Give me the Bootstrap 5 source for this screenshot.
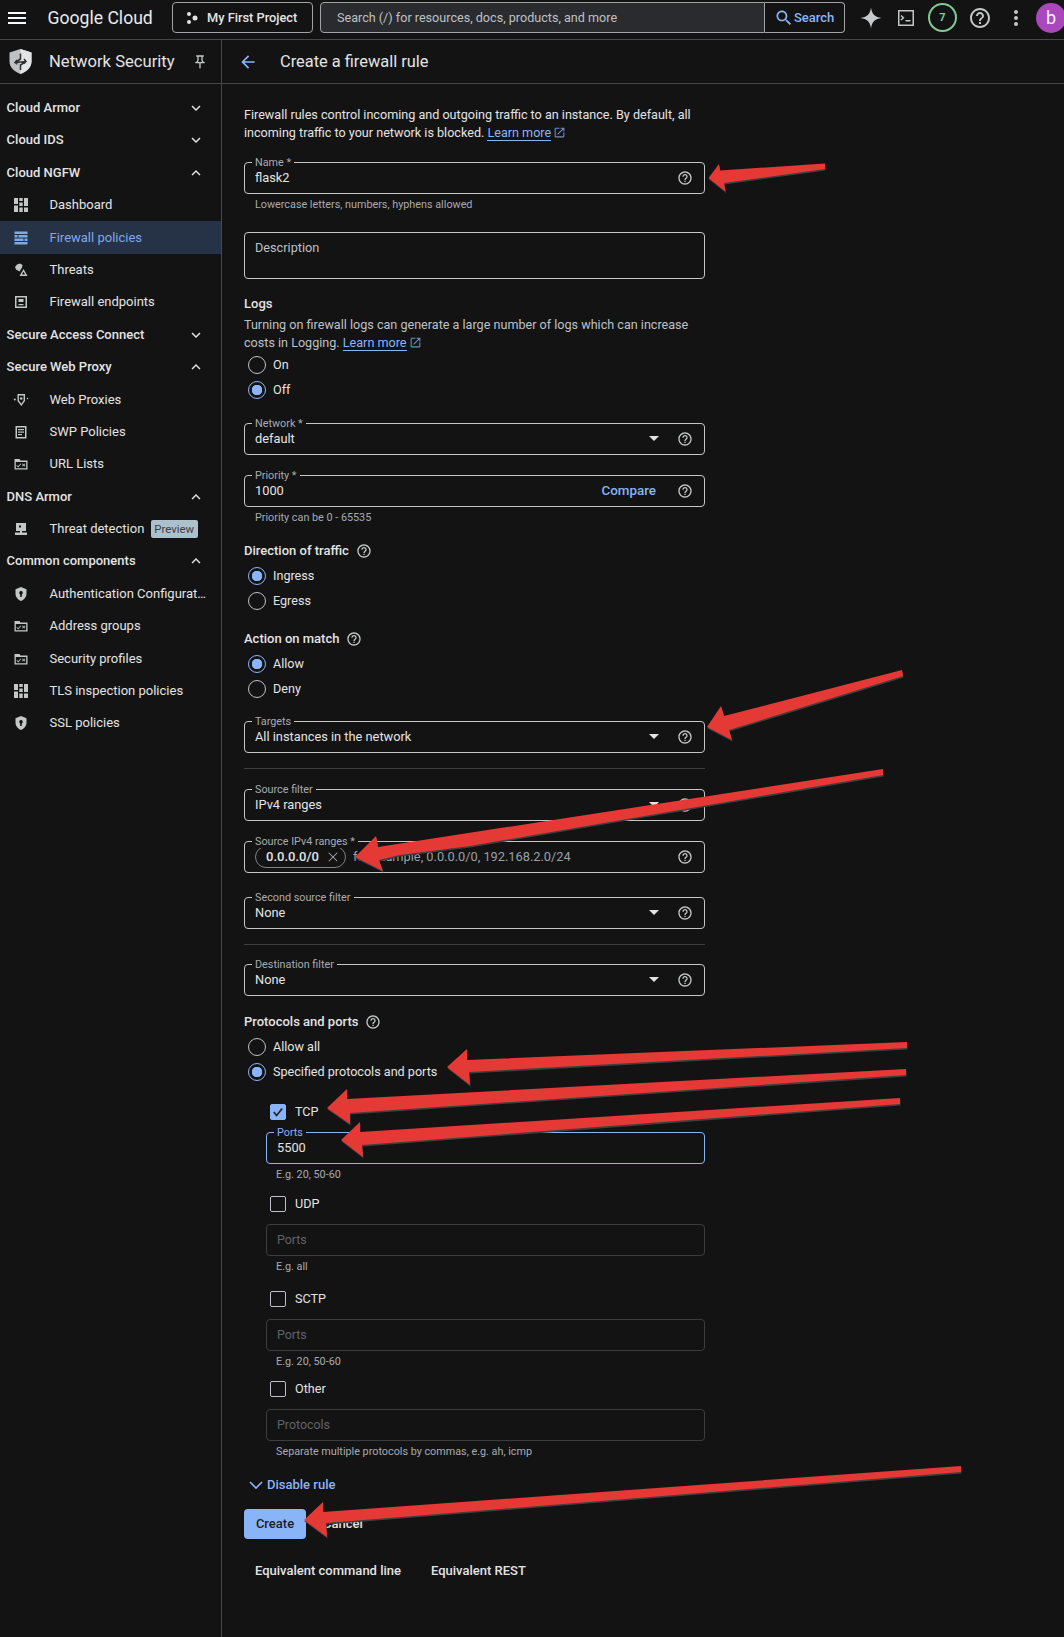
<!DOCTYPE html>
<html lang="en">
<head>
<meta charset="UTF-8" />
<meta name="viewport" content="width=device-width, initial-scale=1" />
<title>Create a firewall rule</title>
<link href="https://cdn.jsdelivr.net/npm/bootstrap@5.3.0/dist/css/bootstrap.min.css" rel="stylesheet">
<script src="https://cdn.jsdelivr.net/npm/bootstrap@5.3.0/dist/js/bootstrap.bundle.min.js"></script>
<style>
    html, body { background: #131314; }
    body { width: 1064px; height: 1637px; overflow: hidden; position: relative; color: #e3e3e3; font-family: Roboto, "Liberation Sans", sans-serif; font-size: 13px; line-height: 18px; }
    a { color: #8ab4f8; }
    svg { fill: currentColor; flex: none; display: block; }

    /* top bar */
    .topbar { height: 40px; border-bottom: 1px solid #47484a; padding: 0 0 4px 5px; }
    .topbar > * { flex: none; }
    .gc-logo { font-family: Roboto, sans-serif; font-size: 17.6px; color: #e8eaed; margin-left: 18.5px; width: 124.5px; white-space: nowrap; }
    .project-btn { width: 141px; height: 31px; border: 1px solid #a0a2a5; border-radius: 4px; padding-left: 12px; color: #e3e3e3; font-weight: 500; font-size: 12.8px; gap: 8px; }
    .search-box { width: 445px; height: 31px; margin-left: 7px; background: #2a2b2f; border: 1px solid #a0a2a5; border-radius: 4px 0 0 4px; padding-left: 16px; color: #bdc1c6; font-size: 12.6px; }
    .search-go { width: 80px; height: 31px; border: 1px solid #a0a2a5; border-left: 0; border-radius: 0 4px 4px 0; color: #8ab4f8; font-weight: 500; padding-left: 9px; gap: 0; }
    .ic-spark { margin-left: 13.5px; color: #c8c9cb; }
    .ic-term { margin-left: 11.5px; color: #c4c7c5; }
    .ic-help { margin-left: 11px; color: #c4c7c5; }
    .ic-dots { margin-left: 12px; color: #c4c7c5; }
    .count-ring { width: 29px; height: 29px; margin-left: 10px; border: 2px solid #81c995; border-radius: 50%; color: #81c995; font-size: 11px; font-weight: 700; }
    .avatar-b { width: 30px; height: 30px; margin-left: 8px; border-radius: 50%; background: #ab47bc; color: #f3f3f3; font-size: 18px; }

    /* left nav */
    .sidenav { width: 222px; height: 1597px; border-right: 1px solid #47484a; flex: none; }
    .pane-head { height: 44px; border-bottom: 1px solid #47484a; }
    .nav-title { font-size: 16.6px; padding-left: 9px; color: #e3e3e3; }
    .nav-title span { margin-left: 17px; width: 143px; white-space: nowrap; }
    .nav-list { padding-top: 7.8px; }
    .nav-row { height: 32.4px; color: #e3e3e3; }
    .nav-group { padding: 0 16px 0 6.6px; font-weight: 500; justify-content: space-between; }
    .nav-item { padding-left: 13px; gap: 20.5px; }
    .nav-item.sel { background: #263245; color: #7fa9ea; }
    .nav-item svg { color: #c4c7c5; }
    .nav-item.sel svg { color: #7fa9ea; }
    .nav-label { max-width: 160px; }
    .tag-preview { background: #adc1cc; color: #3c4043; font-size: 11.4px; line-height: 18px; height: 18px; padding: 0 3.500px; border-radius: 2px; margin-left: -14px; }

    /* form */
    .form-pane { padding: 21.7px 0 0 22px; width: 483px; font-size: 12.6px; }
    .title-row { padding-left: 16px; font-size: 16.4px; }
    .title-row span { margin-left: 22px; white-space: nowrap; }
    .title-row svg { color: #8ab4f8; }
    .muted-txt { color: #bdc1c6; }
    .ext-ic { display: inline-block; vertical-align: -2px; margin-left: 2px; color: #6f8fc4; }
    a.lm { text-decoration: none; border-bottom: 1px solid #8ab4f8; }
    .o-field { position: relative; height: 32px; border: 1px solid #c4c7c5; border-radius: 4px; padding: 0 11px 0 10px; font-size: 12.8px; }
    .o-field.tall { height: 47px; align-items: flex-start !important; padding-top: 6px; color: #bdc1c6; font-size: 12.7px; }
    .o-field.inset { margin-left: 22px; }
    .o-field.focus { border-color: #8ab4f8; }
    .o-field.off { border-color: #3c3d40; color: #5f6368; font-size: 12.4px; }
    .o-label { position: absolute; left: 7px; top: -6px; padding: 0 3px; background: #131314; color: #a8abaf; font-size: 10.8px; line-height: 12px; white-space: nowrap; }
    .o-field.focus .o-label { color: #8ab4f8; }
    .o-val { flex: 1 1 auto; }
    .caret-dn { width: 0; height: 0; border: 5px solid transparent; border-top: 5px solid #e3e3e3; border-bottom: 0; margin-right: 18px; }
    .compare-link { font-size: 13.4px; margin-right: 21px; }
    .help-ic { color: #c4c7c5; }
    .hint-txt { font-size: 10.8px; line-height: 18px; height: 16px; margin-top: 2px; padding-left: 11px; color: #a8abaf; }
    .hint-txt.inset { padding-left: 32px; }
    .sect-title { font-weight: 500; font-size: 13px; height: 18px; gap: 7px; }
    .opt-row { height: 25px; padding-left: 4px; gap: 7px; margin: 0; }
    .opt-row .form-check-input { width: 18px; height: 18px; margin: 0; float: none; flex: none; background-color: transparent; border: 1px solid #bdc1c6; }
    .opt-row .form-check-input:checked { border-color: #8ab4f8; background: radial-gradient(circle, #8ab4f8 0 5px, transparent 5.500px); }
    .chk-row { height: 24px; padding-left: 26px; gap: 9px; }
    .chk-row .form-check-input { width: 16px; height: 16px; margin: 0; float: none; flex: none; background-color: transparent; border: 1px solid #bdc1c6; border-radius: 2px; }
    .chk-row .form-check-input:checked { background-color: #8ab4f8; border-color: #8ab4f8; background-image: url("data:image/svg+xml,%3csvg xmlns='http://www.w3.org/2000/svg' viewBox='0 0 20 20'%3e%3cpath fill='none' stroke='%23202124' stroke-width='2.4' d='m4 10 4 5 8-10'/%3e%3c/svg%3e"); }
    .chip-ip { height: 22px; width: 91px; margin-right: 7px; border: 1px solid #7f8184; border-radius: 11px; padding: 0 3px 0 10px; font-weight: 500; justify-content: space-between; font-size: 13px; }
    .ph-txt { color: #9aa0a6; }
    .rule-line { height: 1px; background: #3c3d40; }
    .disable-link { color: #8ab4f8; font-weight: 500; font-size: 13px; height: 18px; padding-left: 5px; gap: 4px; }
    .btn-create { width: 62px; height: 30px; padding: 0; background: #8ab4f8; border: 0; border-radius: 4px; color: #202124; font-size: 13px; line-height: 30px; font-weight: 500; }
    .btn-cancel { height: 30px; padding: 0 0 0 17px; border: 0; color: #e3e3e3; font-size: 13px; line-height: 30px; font-weight: 500; }
    .equiv-row { padding-left: 11px; gap: 30px; font-size: 13px; font-weight: 500; color: #e3e3e3; }
    .arrow-layer { position: absolute; left: 0; top: 0; pointer-events: none; }

    /* vertical spacing from the screenshot */
    .t1 { margin-top: 1px; }
    .t3 { margin-top: 3px; }
    .t4 { margin-top: 4px; }
    .t8 { margin-top: 8px; }
    .t10 { margin-top: 10px; }
    .t13 { margin-top: 13px; }
    .t15 { margin-top: 15px; }
    .t16 { margin-top: 16px; }
    .t17 { margin-top: 17px; }
    .t19 { margin-top: 19px; }
    .t20 { margin-top: 20px; }
    .t23 { margin-top: 23px; }
    .t24 { margin-top: 24px; }
</style>
</head>
<body>

<svg width="0" height="0" class="position-absolute">
    <symbol id="i-help" viewBox="0 0 24 24"><path d="M11 18h2v-2h-2v2zm1-16C6.48 2 2 6.48 2 12s4.48 10 10 10 10-4.48 10-10S17.52 2 12 2zm0 18c-4.41 0-8-3.59-8-8s3.59-8 8-8 8 3.59 8 8-3.59 8-8 8zm0-14c-2.21 0-4 1.79-4 4h2c0-1.1.9-2 2-2s2 .9 2 2c0 2-3 1.75-3 5h2c0-2.25 3-2.5 3-5 0-2.21-1.79-4-4-4z"/></symbol>
    <symbol id="i-down" viewBox="0 0 24 24"><path d="M16.59 8.59 12 13.17 7.41 8.59 6 10l6 6 6-6z"/></symbol>
    <symbol id="i-up" viewBox="0 0 24 24"><path d="M12 8l-6 6 1.41 1.41L12 10.83l4.59 4.58L18 14z"/></symbol>
    <symbol id="i-ext" viewBox="0 0 24 24"><path d="M19 19H5V5h7V3H5c-1.11 0-2 .9-2 2v14c0 1.1.89 2 2 2h14c1.1 0 2-.9 2-2v-7h-2v7zM14 3v2h3.59l-9.83 9.83 1.41 1.41L19 6.41V10h2V3h-7z"/></symbol>
    <symbol id="i-grid" viewBox="0 0 16 16"><rect x="1" y="1" width="4" height="6"/><rect x="1" y="8.5" width="4" height="6.5"/><rect x="6.3" y="1" width="3.4" height="3"/><rect x="6.3" y="5.5" width="3.4" height="3.5"/><rect x="6.3" y="10.5" width="3.4" height="4.5"/><rect x="11" y="1" width="4" height="8"/><rect x="11" y="10.5" width="4" height="4.5"/></symbol>
    <symbol id="i-wall" viewBox="0 0 16 16"><rect x="1.500" y="1.500" width="13" height="2.500"/><rect x="1.500" y="5" width="3" height="2.500"/><rect x="5.500" y="5" width="9" height="2.500"/><rect x="1.500" y="8.500" width="9" height="2.500"/><rect x="11.500" y="8.500" width="3" height="2.500"/><rect x="1.500" y="12" width="13" height="2.500"/></symbol>
    <symbol id="i-threat" viewBox="0 0 16 16"><path d="M7 1.500l2.500 1.500-.5 2.500-2.500 4-3.500-2-1-2.500 2-2.500z"/><path d="M10.500 7l4 7h-8zm0 2.500L9 12.500h3z" fill-rule="evenodd"/></symbol>
    <symbol id="i-endpoint" viewBox="0 0 16 16"><path d="M2 2h12v12H2zm1.500 1.500v9h9v-9z" fill-rule="evenodd"/><rect x="5.500" y="5" width="5" height="3"/><rect x="5.500" y="10" width="5" height="1.200"/></symbol>
    <symbol id="i-proxy" viewBox="0 0 16 16"><path d="M4.500 2h7.500v7l-3.700 5L4.500 9zm1.400 1.400v5.100l2.400 3.200 2.300-3.200V3.400z" fill-rule="evenodd"/><circle cx="8.200" cy="6.500" r="1.300"/><circle cx="1.800" cy="7.500" r="1"/><circle cx="14.500" cy="6.500" r=".8"/></symbol>
    <symbol id="i-doc" viewBox="0 0 16 16"><path d="M2.500 2h11v12.500h-11zM4 3.500V13h8V3.500z" fill-rule="evenodd"/><rect x="5" y="5" width="6" height="1.200"/><rect x="5" y="7.500" width="6" height="1.200"/><rect x="5" y="10" width="4" height="1.200"/></symbol>
    <symbol id="i-folder" viewBox="0 0 16 16"><path d="M1.500 3h5l1 1.500h7v9h-13zM2.800 6v6.200h10.400V6z" fill-rule="evenodd"/><path d="M4 9l1.200 1.300L7.500 7.500l.7.600-3 3.500L3.400 9.600zM9 8l.7-.6 1 1 1-1 .6.600-1 1 1 1-.6.600-1-1-1 1L9 10l1-1z"/></symbol>
    <symbol id="i-monitor" viewBox="0 0 16 16"><path d="M3 2h10v8H9v1.500h5V14H2v-2.500h5V10H3z"/><rect x="6" y="4.500" width="2" height="2" fill="#131314"/></symbol>
    <symbol id="i-shield" viewBox="0 0 16 16"><path d="M8 1l5.500 2.300v4.200c0 3.400-2.300 6.200-5.500 7.500-3.200-1.300-5.500-4.100-5.500-7.500V3.300zM8 5a1.800 1.800 0 0 0-.8 3.400V11h1.600V8.400A1.800 1.800 0 0 0 8 5z" fill-rule="evenodd"/></symbol>
</svg>

<header class="topbar d-flex align-items-center">
    <svg width="24" height="24" viewBox="0 0 24 24" class="text-light"><path d="M3 18h18v-2H3v2zm0-5h18v-2H3v2zm0-7v2h18V6H3z"/></svg>
    <div class="gc-logo">Google Cloud</div>
    <div class="project-btn d-flex align-items-center">
        <svg width="14" height="14" viewBox="0 0 14 14"><circle cx="4" cy="3" r="2"/><circle cx="10" cy="7" r="2.500"/><circle cx="4" cy="11" r="2"/></svg>
        <span>My First Project</span>
    </div>
    <div class="search-box d-flex align-items-center">Search (/) for resources, docs, products, and more</div>
    <div class="search-go d-flex align-items-center">
        <svg width="20" height="20" viewBox="0 0 24 24"><path d="M15.500 14h-.79l-.28-.27C15.410 12.590 16 11.110 16 9.500 16 5.910 13.090 3 9.500 3S3 5.910 3 9.500 5.910 16 9.500 16c1.610 0 3.090-.59 4.230-1.570l.27.28v.79l5 4.990L20.490 19l-4.990-5zm-6 0C7.010 14 5 11.990 5 9.500S7.010 5 9.500 5 14 7.010 14 9.500 11.990 14 9.500 14z"/></svg>
        <span>Search</span>
    </div>
    <svg width="24" height="24" viewBox="0 0 24 24" class="ic-spark"><path d="M12 1.500C12.800 8 16 11.200 22.500 12 16 12.800 12.800 16 12 22.500 11.200 16 8 12.800 1.500 12 8 11.200 11.200 8 12 1.500z"/></svg>
    <svg width="24" height="24" viewBox="0 0 24 24" class="ic-term"><path d="M4 4h16v16H4zm1.500 1.500v13h13v-13z" fill-rule="evenodd"/><path d="M7.500 9l3 2.800-3 2.800-1-1 1.900-1.800-1.900-1.800zM11.500 14h5v1.400h-5z"/></svg>
    <div class="count-ring d-flex align-items-center justify-content-center">7</div>
    <svg width="24" height="24" class="ic-help"><use href="#i-help"/></svg>
    <svg width="24" height="24" viewBox="0 0 24 24" class="ic-dots"><circle cx="12" cy="6" r="2"/><circle cx="12" cy="12" r="2"/><circle cx="12" cy="18" r="2"/></svg>
    <div class="avatar-b d-flex align-items-center justify-content-center">b</div>
</header>

<div class="d-flex">
    <aside class="sidenav">
        <div class="pane-head nav-title d-flex align-items-center">
            <svg width="23" height="25" viewBox="0 0 23 25"><path d="M11.500 0L22.500 3.500v9c0 5.500-4.500 10-11 12.500C5 22.500.5 18 .5 12.500v-9z" fill="#bfc1c3"/><path d="M11.500 0v25c6.500-2.500 11-7 11-12.500v-9z" fill="#e3e4e5"/><path d="M11.500 4.500V10L6 13.500l11-1-5.500 3.500v5M8 11l-2 2.500 2.500 1.500M15 10l2 2.500-2 2" stroke="#2e2f31" stroke-width="1.500" fill="none"/></svg>
            <span>Network Security</span>
            <svg width="16" height="16" viewBox="0 0 24 24"><path d="M14 4v5c0 1.120.37 2.160 1 3H9c.65-.86 1-1.900 1-3V4h4m3-2H7c-.55 0-1 .45-1 1s.45 1 1 1h1v5c0 1.660-1.340 3-3 3v2h5.970v7l1 1 1-1v-7H19v-2c-1.660 0-3-1.340-3-3V4h1c.55 0 1-.45 1-1s-.45-1-1-1z" fill="#c4c7c5"/></svg>
        </div>
        <nav class="nav-list">
            <div class="nav-row nav-group d-flex align-items-center">Cloud Armor<svg width="18" height="18"><use href="#i-down"/></svg></div>
            <div class="nav-row nav-group d-flex align-items-center">Cloud IDS<svg width="18" height="18"><use href="#i-down"/></svg></div>
            <div class="nav-row nav-group d-flex align-items-center">Cloud NGFW<svg width="18" height="18"><use href="#i-up"/></svg></div>
            <div class="nav-row nav-item d-flex align-items-center"><svg width="16" height="16"><use href="#i-grid"/></svg>Dashboard</div>
            <div class="nav-row nav-item sel d-flex align-items-center"><svg width="16" height="16"><use href="#i-wall"/></svg>Firewall policies</div>
            <div class="nav-row nav-item d-flex align-items-center"><svg width="16" height="16"><use href="#i-threat"/></svg>Threats</div>
            <div class="nav-row nav-item d-flex align-items-center"><svg width="16" height="16"><use href="#i-endpoint"/></svg>Firewall endpoints</div>
            <div class="nav-row nav-group d-flex align-items-center">Secure Access Connect<svg width="18" height="18"><use href="#i-down"/></svg></div>
            <div class="nav-row nav-group d-flex align-items-center">Secure Web Proxy<svg width="18" height="18"><use href="#i-up"/></svg></div>
            <div class="nav-row nav-item d-flex align-items-center"><svg width="16" height="16"><use href="#i-proxy"/></svg>Web Proxies</div>
            <div class="nav-row nav-item d-flex align-items-center"><svg width="16" height="16"><use href="#i-doc"/></svg>SWP Policies</div>
            <div class="nav-row nav-item d-flex align-items-center"><svg width="16" height="16"><use href="#i-folder"/></svg>URL Lists</div>
            <div class="nav-row nav-group d-flex align-items-center">DNS Armor<svg width="18" height="18"><use href="#i-up"/></svg></div>
            <div class="nav-row nav-item d-flex align-items-center"><svg width="16" height="16"><use href="#i-monitor"/></svg>Threat detection<span class="tag-preview">Preview</span></div>
            <div class="nav-row nav-group d-flex align-items-center">Common components<svg width="18" height="18"><use href="#i-up"/></svg></div>
            <div class="nav-row nav-item d-flex align-items-center"><svg width="16" height="16"><use href="#i-shield"/></svg><span class="nav-label">Authentication Configurat…</span></div>
            <div class="nav-row nav-item d-flex align-items-center"><svg width="16" height="16"><use href="#i-folder"/></svg>Address groups</div>
            <div class="nav-row nav-item d-flex align-items-center"><svg width="16" height="16"><use href="#i-folder"/></svg>Security profiles</div>
            <div class="nav-row nav-item d-flex align-items-center"><svg width="16" height="16"><use href="#i-grid"/></svg>TLS inspection policies</div>
            <div class="nav-row nav-item d-flex align-items-center"><svg width="16" height="16"><use href="#i-shield"/></svg>SSL policies</div>
        </nav>
    </aside>

    <main class="flex-grow-1">
        <div class="pane-head title-row d-flex align-items-center">
            <svg width="20" height="20" viewBox="0 0 24 24"><path d="M20 11H7.830l5.590-5.590L12 4l-8 8 8 8 1.410-1.410L7.830 13H20v-2z"/></svg>
            <span>Create a firewall rule</span>
        </div>

        <form class="form-pane">
            <p class="mb-0">Firewall rules control incoming and outgoing traffic to an instance. By default, all incoming traffic to your network is blocked. <a href="#" class="lm">Learn more</a><svg width="13" height="13" class="ext-ic"><use href="#i-ext"/></svg></p>

            <div class="o-field d-flex align-items-center t20">
                <span class="o-label">Name *</span>
                <span class="o-val">flask2</span>
                <svg width="16" height="16" class="help-ic"><use href="#i-help"/></svg>
            </div>
            <div class="hint-txt">Lowercase letters, numbers, hyphens allowed</div>

            <div class="o-field tall d-flex t20">Description</div>

            <div class="sect-title d-flex align-items-center t16">Logs</div>
            <p class="mb-0 t3 muted-txt">Turning on firewall logs can generate a large number of logs which can increase costs in Logging. <a href="#" class="lm">Learn more</a><svg width="13" height="13" class="ext-ic"><use href="#i-ext"/></svg></p>
            <div class="t1">
                <label class="opt-row d-flex align-items-center"><input class="form-check-input" type="radio" name="logs">On</label>
                <label class="opt-row d-flex align-items-center"><input class="form-check-input" type="radio" name="logs" checked>Off</label>
            </div>

            <div class="o-field d-flex align-items-center t20">
                <span class="o-label">Network *</span>
                <span class="o-val">default</span><i class="caret-dn"></i>
                <svg width="16" height="16" class="help-ic"><use href="#i-help"/></svg>
            </div>
            <div class="o-field d-flex align-items-center t20">
                <span class="o-label">Priority *</span>
                <span class="o-val">1000</span>
                <a href="#" class="text-decoration-none fw-medium compare-link">Compare</a>
                <svg width="16" height="16" class="help-ic"><use href="#i-help"/></svg>
            </div>
            <div class="hint-txt">Priority can be 0 - 65535</div>

            <div class="sect-title d-flex align-items-center t17">Direction of traffic <svg width="16" height="16" class="help-ic"><use href="#i-help"/></svg></div>
            <div class="t4">
                <label class="opt-row d-flex align-items-center"><input class="form-check-input" type="radio" name="dir" checked>Ingress</label>
                <label class="opt-row d-flex align-items-center"><input class="form-check-input" type="radio" name="dir">Egress</label>
            </div>

            <div class="sect-title d-flex align-items-center t16">Action on match <svg width="16" height="16" class="help-ic"><use href="#i-help"/></svg></div>
            <div class="t4">
                <label class="opt-row d-flex align-items-center"><input class="form-check-input" type="radio" name="act" checked>Allow</label>
                <label class="opt-row d-flex align-items-center"><input class="form-check-input" type="radio" name="act">Deny</label>
            </div>

            <div class="o-field d-flex align-items-center t19">
                <span class="o-label">Targets</span>
                <span class="o-val">All instances in the network</span><i class="caret-dn"></i>
                <svg width="16" height="16" class="help-ic"><use href="#i-help"/></svg>
            </div>
            <div class="rule-line t15"></div>
            <div class="o-field d-flex align-items-center t20">
                <span class="o-label">Source filter</span>
                <span class="o-val">IPv4 ranges</span><i class="caret-dn"></i>
                <svg width="16" height="16" class="help-ic"><use href="#i-help"/></svg>
            </div>
            <div class="o-field d-flex align-items-center t20">
                <span class="o-label">Source IPv4 ranges *</span>
                <span class="chip-ip d-flex align-items-center">0.0.0.0/0<svg width="18" height="18" viewBox="0 0 24 24"><path d="M18 6.700 17.300 6 12 11.300 6.700 6 6 6.700 11.300 12 6 17.300l.7.7L12 12.700l5.300 5.300.7-.7L12.700 12z" fill="#bdc1c6"/></svg></span>
                <span class="o-val ph-txt">for example, 0.0.0.0/0, 192.168.2.0/24</span>
                <svg width="16" height="16" class="help-ic"><use href="#i-help"/></svg>
            </div>
            <div class="o-field d-flex align-items-center t24">
                <span class="o-label">Second source filter</span>
                <span class="o-val">None</span><i class="caret-dn"></i>
                <svg width="16" height="16" class="help-ic"><use href="#i-help"/></svg>
            </div>
            <div class="rule-line t15"></div>
            <div class="o-field d-flex align-items-center t19">
                <span class="o-label">Destination filter</span>
                <span class="o-val">None</span><i class="caret-dn"></i>
                <svg width="16" height="16" class="help-ic"><use href="#i-help"/></svg>
            </div>

            <div class="sect-title d-flex align-items-center t17">Protocols and ports <svg width="16" height="16" class="help-ic"><use href="#i-help"/></svg></div>
            <div class="t4">
                <label class="opt-row d-flex align-items-center"><input class="form-check-input" type="radio" name="proto">Allow all</label>
                <label class="opt-row d-flex align-items-center"><input class="form-check-input" type="radio" name="proto" checked>Specified protocols and ports</label>
            </div>

            <label class="chk-row d-flex align-items-center t15"><input class="form-check-input" type="checkbox" checked>TCP</label>
            <div class="o-field inset focus d-flex align-items-center t8">
                <span class="o-label">Ports</span>
                <span class="o-val">5500</span>
            </div>
            <div class="hint-txt inset">E.g. 20, 50-60</div>

            <label class="chk-row d-flex align-items-center t10"><input class="form-check-input" type="checkbox">UDP</label>
            <div class="o-field inset off d-flex align-items-center t8">Ports</div>
            <div class="hint-txt inset">E.g. all</div>

            <label class="chk-row d-flex align-items-center t13"><input class="form-check-input" type="checkbox">SCTP</label>
            <div class="o-field inset off d-flex align-items-center t8">Ports</div>
            <div class="hint-txt inset">E.g. 20, 50-60</div>

            <label class="chk-row d-flex align-items-center t8"><input class="form-check-input" type="checkbox">Other</label>
            <div class="o-field inset off d-flex align-items-center t8">Protocols</div>
            <div class="hint-txt inset">Separate multiple protocols by commas, e.g. ah, icmp</div>

            <div class="disable-link d-flex align-items-center t17">
                <svg width="14" height="14" viewBox="0 0 14 14"><polyline points="1,4 7,10 13,4" fill="none" stroke="currentColor" stroke-width="1.600"/></svg>
                Disable rule
            </div>
            <div class="d-flex t15">
                <button type="button" class="btn btn-create">Create</button>
                <button type="button" class="btn btn-cancel">Cancel</button>
            </div>
            <div class="equiv-row d-flex t23">
                <span>Equivalent command line</span>
                <span>Equivalent REST</span>
            </div>
        </form>
    </main>
</div>

<svg class="arrow-layer" width="1064" height="1637" viewBox="0 0 1064 1637">
    <defs>
        <g id="red-arrows">
            <polygon points="825,163.500 720,170.500 719,164 708.500,178 725.500,191.500 724,183 825,169"/>
            <polygon points="902,670 724,716 721,706 707,727 732,740 729,730 903,676"/>
            <polygon points="883,769 378,847 376,836 355,857 383,871 379,860 400,855 470,846 883,775"/>
            <polygon points="907,1042 467,1060 467,1049 447,1067 470,1085 469,1072 907,1048"/>
            <polygon points="906,1069 347,1099 347,1089 327,1108 350,1124 350,1113 906,1075"/>
            <polygon points="900,1098 360,1132 360,1122 341,1140 363,1157 362,1145 900,1104"/>
            <polygon points="961,1466 323,1512 323,1502 304,1520 327,1537 326,1523 961,1472"/>
        </g>
    </defs>
    <use href="#red-arrows" fill="#3f3f41" transform="translate(.5 1.500)"/>
    <use href="#red-arrows" fill="#e53935"/>
</svg>

</body>
</html>
